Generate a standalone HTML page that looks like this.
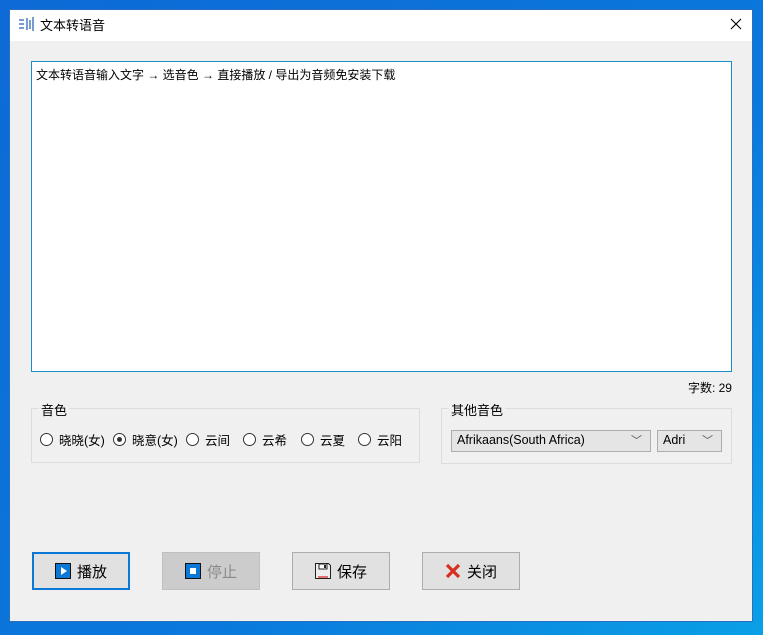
<!DOCTYPE html>
<html><head><meta charset="utf-8"><style>
*{margin:0;padding:0;box-sizing:border-box}
body{width:763px;height:635px;overflow:hidden;background:linear-gradient(135deg,#0d6ad6,#0a78dc 60%,#0aa0e6);font-family:"Liberation Sans","Noto Sans CJK SC",sans-serif;font-size:13px;color:#000;position:relative}
.win{position:absolute;left:10px;top:10px;width:742px;height:611px;background:#f0f0f0;outline:1px solid #2a6fc0}
.title{position:absolute;left:0;top:0;width:742px;height:31px;background:#fff}
.abs{position:absolute}
.ta{position:absolute;left:21px;top:51px;width:701px;height:311px;background:#fff;border:1px solid #1a8cc8;padding:4px 4px;font-size:12px}
.grp{position:absolute;border:1px solid #dcdcdc}
.lbl{position:absolute;background:#f0f0f0;padding:0 2px;font-size:13px}
.rad{position:absolute;font-size:12.5px;display:flex;align-items:center}
.rad i{display:inline-block;width:13px;height:13px;border:1px solid #333;border-radius:50%;margin-right:6px;position:relative;background:#fff}
.rad i.on::after{content:"";position:absolute;left:3px;top:3px;width:5px;height:5px;border-radius:50%;background:#333}
.sel{position:absolute;height:22px;border:1px solid #adadad;background:#e5e5e5;font-size:12.5px;padding:2px 5px}
.sel span{position:absolute;right:8px;top:1px;color:#555;font-size:11px}
.btn{position:absolute;top:542px;width:98px;height:38px;border:1px solid #adadad;background:#e1e1e1;display:flex;align-items:center;justify-content:center;font-size:15px}
.btn svg{margin-right:6px}
</style></head><body>
<div class="win">
 <div class="title">
  <svg class="abs" style="left:9px;top:7px" width="16" height="14" viewBox="0 0 16 14"><g stroke="#4a7fc0" stroke-width="1.5" fill="none"><path d="M0 3h5M0 7h5M0 11h5M8 1v12M11 3v9M14 0v14"/></g></svg>
  <div class="abs" style="left:30px;top:5px;font-size:13px">文本转语音</div>
  <svg class="abs" style="left:720px;top:8px" width="12" height="12" viewBox="0 0 12 12"><path d="M1 1L11 11M11 1L1 11" stroke="#000" stroke-width="1.1"/></svg>
 </div>
 <div class="ta">文本转语音输入文字 → 选音色 → 直接播放 / 导出为音频免安装下载</div>
 <div class="abs" style="right:20px;top:369px;font-size:12px">字数: 29</div>
 <div class="grp" style="left:21px;top:398px;width:389px;height:55px"></div>
 <div class="lbl" style="left:29px;top:390px">音色</div>
 <div class="grp" style="left:431px;top:398px;width:291px;height:56px"></div>
 <div class="lbl" style="left:439px;top:390px">其他音色</div>
 <div class="rad" style="left:30px;top:420px"><i></i>晓晓(女)</div>
 <div class="rad" style="left:103px;top:420px"><i class="on"></i>晓意(女)</div>
 <div class="rad" style="left:176px;top:420px"><i></i>云间</div>
 <div class="rad" style="left:233px;top:420px"><i></i>云希</div>
 <div class="rad" style="left:291px;top:420px"><i></i>云夏</div>
 <div class="rad" style="left:348px;top:420px"><i></i>云阳</div>
 <div class="sel" style="left:441px;top:420px;width:200px">Afrikaans(South Africa)<span>﹀</span></div>
 <div class="sel" style="left:647px;top:420px;width:65px">Adri<span>﹀</span></div>
 <div class="btn" style="left:22px;border:2px solid #0b78d7">
  <svg width="16" height="16"><rect x="0.5" y="0.5" width="15" height="15" fill="#0b78d7" stroke="#111"/><path d="M6 4l6 4-6 4z" fill="#fff"/></svg>播放</div>
 <div class="btn" style="left:152px;background:#cccccc;border-color:#bfbfbf;color:#8a8a8a">
  <svg width="16" height="16"><rect x="0.5" y="0.5" width="15" height="15" fill="#0b78d7" stroke="#111"/><rect x="5" y="5" width="6" height="6" fill="#fff"/></svg>停止</div>
 <div class="btn" style="left:282px">
  <svg width="16" height="16"><path d="M0.5 0.5h13l2 2v13h-15z" fill="#eee" stroke="#222"/><rect x="4" y="1" width="8" height="5" fill="#fff" stroke="#222"/><rect x="9" y="2" width="2" height="3" fill="#222"/><rect x="3" y="13" width="10" height="2" fill="#e07070"/></svg>保存</div>
 <div class="btn" style="left:412px">
  <svg width="16" height="16"><path d="M2 2L14 14M14 2L2 14" stroke="#d83020" stroke-width="3.2"/></svg>关闭</div>
</div>
</body></html>
